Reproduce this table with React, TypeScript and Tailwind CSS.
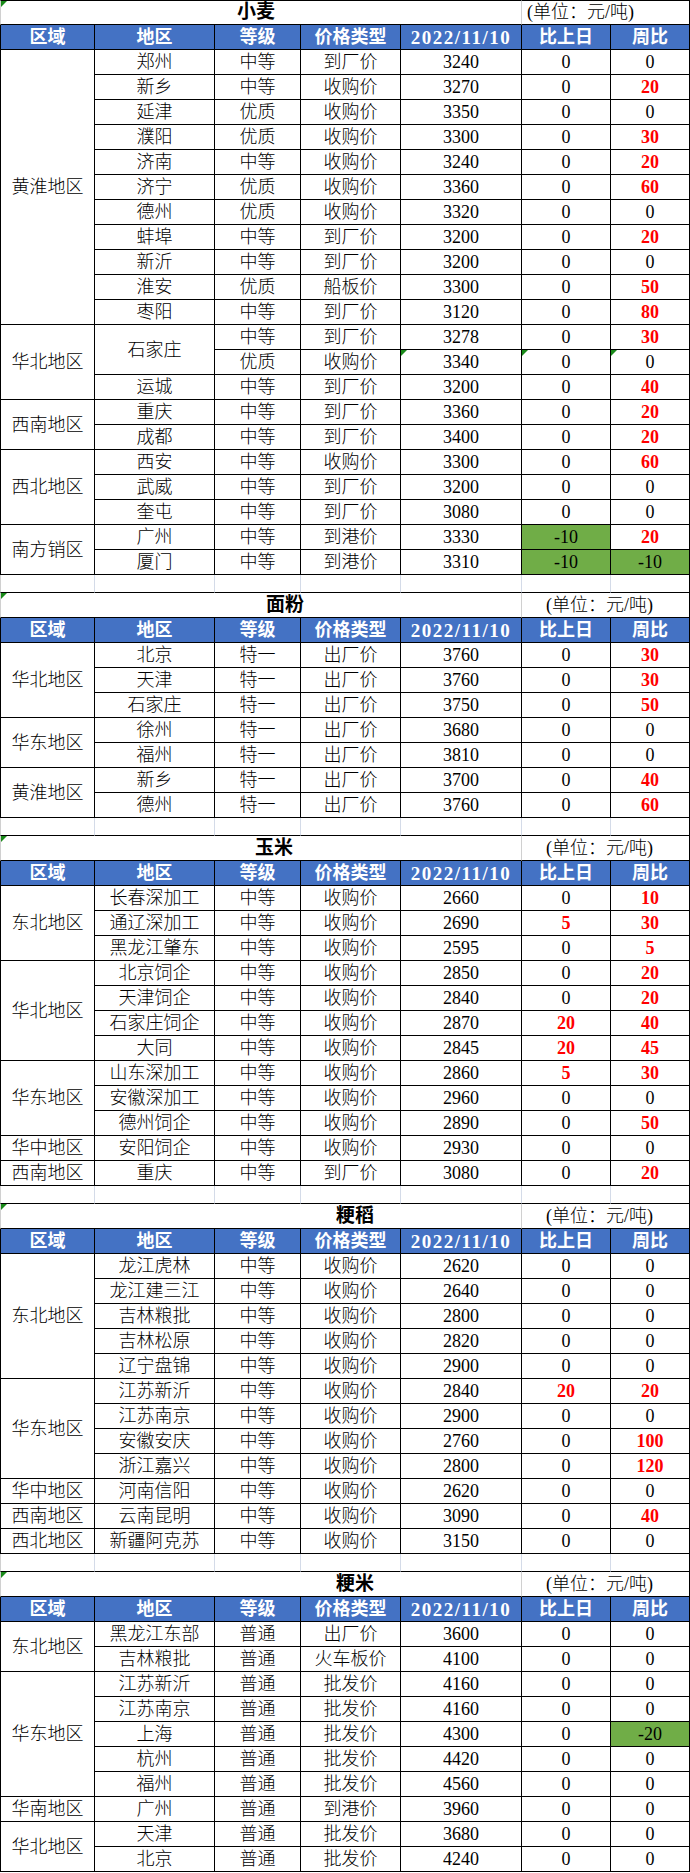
type Row = {
  name?: string;
  nameSpan?: number;
  grade: string;
  kind: string;
  price: string;
  d: string;
  w: string;
  mark?: boolean;
};

type Group = { region: string; rows: Row[] };

type SectionData = {
  title: string;
  titleClass: string;
  unitClass: string;
  groups: Group[];
};

const GRID = 'grid grid-cols-[95px_120px_86px_100px_121px_89px_79px] auto-rows-[25px]';

const SPAN: Record<number, string> = {
  1: 'row-span-1',
  2: 'row-span-2',
  3: 'row-span-3',
  4: 'row-span-4',
  5: 'row-span-5',
  11: 'row-span-11',
};

const r = (name: string, grade: string, kind: string, price: string, d: string, w: string): Row => ({
  name, grade, kind, price, d, w,
});

const sections: SectionData[] = [
  {
    title: '小麦',
    titleClass: 'pl-[236px]',
    unitClass: 'justify-start pl-[5px]',
    groups: [
      {
        region: '黄淮地区',
        rows: [
          r('郑州', '中等', '到厂价', '3240', '0', '0'),
          r('新乡', '中等', '收购价', '3270', '0', '20r'),
          r('延津', '优质', '收购价', '3350', '0', '0'),
          r('濮阳', '优质', '收购价', '3300', '0', '30r'),
          r('济南', '中等', '收购价', '3240', '0', '20r'),
          r('济宁', '优质', '收购价', '3360', '0', '60r'),
          r('德州', '优质', '收购价', '3320', '0', '0'),
          r('蚌埠', '中等', '到厂价', '3200', '0', '20r'),
          r('新沂', '中等', '到厂价', '3200', '0', '0'),
          r('淮安', '优质', '船板价', '3300', '0', '50r'),
          r('枣阳', '中等', '到厂价', '3120', '0', '80r'),
        ],
      },
      {
        region: '华北地区',
        rows: [
          { name: '石家庄', nameSpan: 2, grade: '中等', kind: '到厂价', price: '3278', d: '0', w: '30r' },
          { grade: '优质', kind: '收购价', price: '3340', d: '0', w: '0', mark: true },
          r('运城', '中等', '到厂价', '3200', '0', '40r'),
        ],
      },
      {
        region: '西南地区',
        rows: [
          r('重庆', '中等', '到厂价', '3360', '0', '20r'),
          r('成都', '中等', '到厂价', '3400', '0', '20r'),
        ],
      },
      {
        region: '西北地区',
        rows: [
          r('西安', '中等', '收购价', '3300', '0', '60r'),
          r('武威', '中等', '到厂价', '3200', '0', '0'),
          r('奎屯', '中等', '到厂价', '3080', '0', '0'),
        ],
      },
      {
        region: '南方销区',
        rows: [
          r('广州', '中等', '到港价', '3330', '-10g', '20r'),
          r('厦门', '中等', '到港价', '3310', '-10g', '-10g'),
        ],
      },
    ],
  },
  {
    title: '面粉',
    titleClass: 'pl-[265px]',
    unitClass: 'justify-start pl-[24px]',
    groups: [
      {
        region: '华北地区',
        rows: [
          r('北京', '特一', '出厂价', '3760', '0', '30r'),
          r('天津', '特一', '出厂价', '3760', '0', '30r'),
          r('石家庄', '特一', '出厂价', '3750', '0', '50r'),
        ],
      },
      {
        region: '华东地区',
        rows: [
          r('徐州', '特一', '出厂价', '3680', '0', '0'),
          r('福州', '特一', '出厂价', '3810', '0', '0'),
        ],
      },
      {
        region: '黄淮地区',
        rows: [
          r('新乡', '特一', '出厂价', '3700', '0', '40r'),
          r('德州', '特一', '出厂价', '3760', '0', '60r'),
        ],
      },
    ],
  },
  {
    title: '玉米',
    titleClass: 'pl-[254px]',
    unitClass: 'justify-start pl-[24px]',
    groups: [
      {
        region: '东北地区',
        rows: [
          r('长春深加工', '中等', '收购价', '2660', '0', '10r'),
          r('通辽深加工', '中等', '收购价', '2690', '5r', '30r'),
          r('黑龙江肇东', '中等', '收购价', '2595', '0', '5r'),
        ],
      },
      {
        region: '华北地区',
        rows: [
          r('北京饲企', '中等', '收购价', '2850', '0', '20r'),
          r('天津饲企', '中等', '收购价', '2840', '0', '20r'),
          r('石家庄饲企', '中等', '收购价', '2870', '20r', '40r'),
          r('大同', '中等', '收购价', '2845', '20r', '45r'),
        ],
      },
      {
        region: '华东地区',
        rows: [
          r('山东深加工', '中等', '收购价', '2860', '5r', '30r'),
          r('安徽深加工', '中等', '收购价', '2960', '0', '0'),
          r('德州饲企', '中等', '收购价', '2890', '0', '50r'),
        ],
      },
      { region: '华中地区', rows: [r('安阳饲企', '中等', '收购价', '2930', '0', '0')] },
      { region: '西南地区', rows: [r('重庆', '中等', '到厂价', '3080', '0', '20r')] },
    ],
  },
  {
    title: '粳稻',
    titleClass: 'pl-[335px]',
    unitClass: 'justify-start pl-[24px]',
    groups: [
      {
        region: '东北地区',
        rows: [
          r('龙江虎林', '中等', '收购价', '2620', '0', '0'),
          r('龙江建三江', '中等', '收购价', '2640', '0', '0'),
          r('吉林粮批', '中等', '收购价', '2800', '0', '0'),
          r('吉林松原', '中等', '收购价', '2820', '0', '0'),
          r('辽宁盘锦', '中等', '收购价', '2900', '0', '0'),
        ],
      },
      {
        region: '华东地区',
        rows: [
          r('江苏新沂', '中等', '收购价', '2840', '20r', '20r'),
          r('江苏南京', '中等', '收购价', '2900', '0', '0'),
          r('安徽安庆', '中等', '收购价', '2760', '0', '100r'),
          r('浙江嘉兴', '中等', '收购价', '2800', '0', '120r'),
        ],
      },
      { region: '华中地区', rows: [r('河南信阳', '中等', '收购价', '2620', '0', '0')] },
      { region: '西南地区', rows: [r('云南昆明', '中等', '收购价', '3090', '0', '40r')] },
      { region: '西北地区', rows: [r('新疆阿克苏', '中等', '收购价', '3150', '0', '0')] },
    ],
  },
  {
    title: '粳米',
    titleClass: 'pl-[335px]',
    unitClass: 'justify-start pl-[24px]',
    groups: [
      {
        region: '东北地区',
        rows: [
          r('黑龙江东部', '普通', '出厂价', '3600', '0', '0'),
          r('吉林粮批', '普通', '火车板价', '4100', '0', '0'),
        ],
      },
      {
        region: '华东地区',
        rows: [
          r('江苏新沂', '普通', '批发价', '4160', '0', '0'),
          r('江苏南京', '普通', '批发价', '4160', '0', '0'),
          r('上海', '普通', '批发价', '4300', '0', '-20g'),
          r('杭州', '普通', '批发价', '4420', '0', '0'),
          r('福州', '普通', '批发价', '4560', '0', '0'),
        ],
      },
      { region: '华南地区', rows: [r('广州', '普通', '到港价', '3960', '0', '0')] },
      {
        region: '华北地区',
        rows: [
          r('天津', '普通', '批发价', '3680', '0', '0'),
          r('北京', '普通', '批发价', '4240', '0', '0'),
        ],
      },
    ],
  },
];

const HEADERS = ['区域', '地区', '等级', '价格类型', '2022/11/10', '比上日', '周比'];

function Flag() {
  return (
    <span className="absolute left-0 top-0 h-0 w-0 border-t-[6px] border-r-[6px] border-t-[#1a8a1a] border-r-transparent" />
  );
}

const cell = 'relative flex items-center justify-center border-r border-b border-black leading-none';

function Val({ v, mark }: { v: string; mark?: boolean }) {
  const red = v.endsWith('r');
  const green = v.endsWith('g');
  const text = red || green ? v.slice(0, -1) : v;
  return (
    <div
      className={`${cell} ${red ? 'font-bold text-[#ff0000]' : ''} ${green ? 'bg-[#70ad47]' : ''}`}
    >
      {mark && <Flag />}
      {text}
    </div>
  );
}

function Section({ data, first, blank }: { data: SectionData; first?: boolean; blank?: boolean }) {
  return (
    <div>
      <div className={GRID}>
        <div
          className={`relative col-span-5 flex items-center border-l border-l-[#d0d0d0] border-r border-r-[#d0d0d0] border-b border-b-black text-[19px] font-bold ${first ? 'border-t border-t-black' : ''} ${data.titleClass}`}
        >
          <Flag />
          {data.title}
        </div>
        <div
          className={`col-span-2 flex items-center border-r border-b border-black text-[18px] ${first ? 'border-t' : ''} ${data.unitClass}`}
        >
          (单位：元/吨)
        </div>

        {HEADERS.map((h, i) => (
          <div
            key={h}
            className={`${cell} bg-[#4472c4] font-bold text-white ${i === 0 ? 'border-l' : ''} ${i === 4 ? 'text-[19px] tracking-[1.5px]' : 'text-[18px]'}`}
          >
            {h}
          </div>
        ))}

        {data.groups.map((g) => [
          <div key={g.region} className={`${cell} border-l text-[18px] ${SPAN[g.rows.length]}`}>
            {g.region}
          </div>,
          ...g.rows.map((row, j) => (
            <div key={`${g.region}-${j}`} className="contents text-[18px]">
              {row.name !== undefined && (
                <div className={`${cell} ${row.nameSpan ? SPAN[row.nameSpan] : ''}`}>{row.name}</div>
              )}
              <div className={cell}>{row.grade}</div>
              <div className={cell}>{row.kind}</div>
              <Val v={row.price} mark={row.mark} />
              <Val v={row.d} mark={row.mark} />
              <Val v={row.w} mark={row.mark} />
            </div>
          )),
        ])}
      </div>

      {blank && (
        <div className="grid grid-cols-[95px_120px_86px_100px_121px_89px_79px] h-[18px]">
          <div className="border-l border-l-[#d0d0d0] border-r border-r-[#d4dbe8] border-b border-b-black" />
          <div className="border-r border-r-[#d4dbe8] border-b border-b-black" />
          <div className="border-r border-r-[#d4dbe8] border-b border-b-black" />
          <div className="border-r border-r-[#d4dbe8] border-b border-b-black" />
          <div className="border-r border-r-[#d4dbe8] border-b border-b-black" />
          <div className="border-r border-r-[#d4dbe8] border-b border-b-black" />
          <div className="border-r border-r-black border-b border-b-black" />
        </div>
      )}
    </div>
  );
}

export default function App() {
  return (
    <div className="w-[690px] bg-white text-black font-light font-['Liberation_Serif','Noto_Sans_CJK_SC',serif] text-[18px]">
      {sections.map((s, i) => (
        <Section key={s.title} data={s} first={i === 0} blank={i < sections.length - 1} />
      ))}
    </div>
  );
}
